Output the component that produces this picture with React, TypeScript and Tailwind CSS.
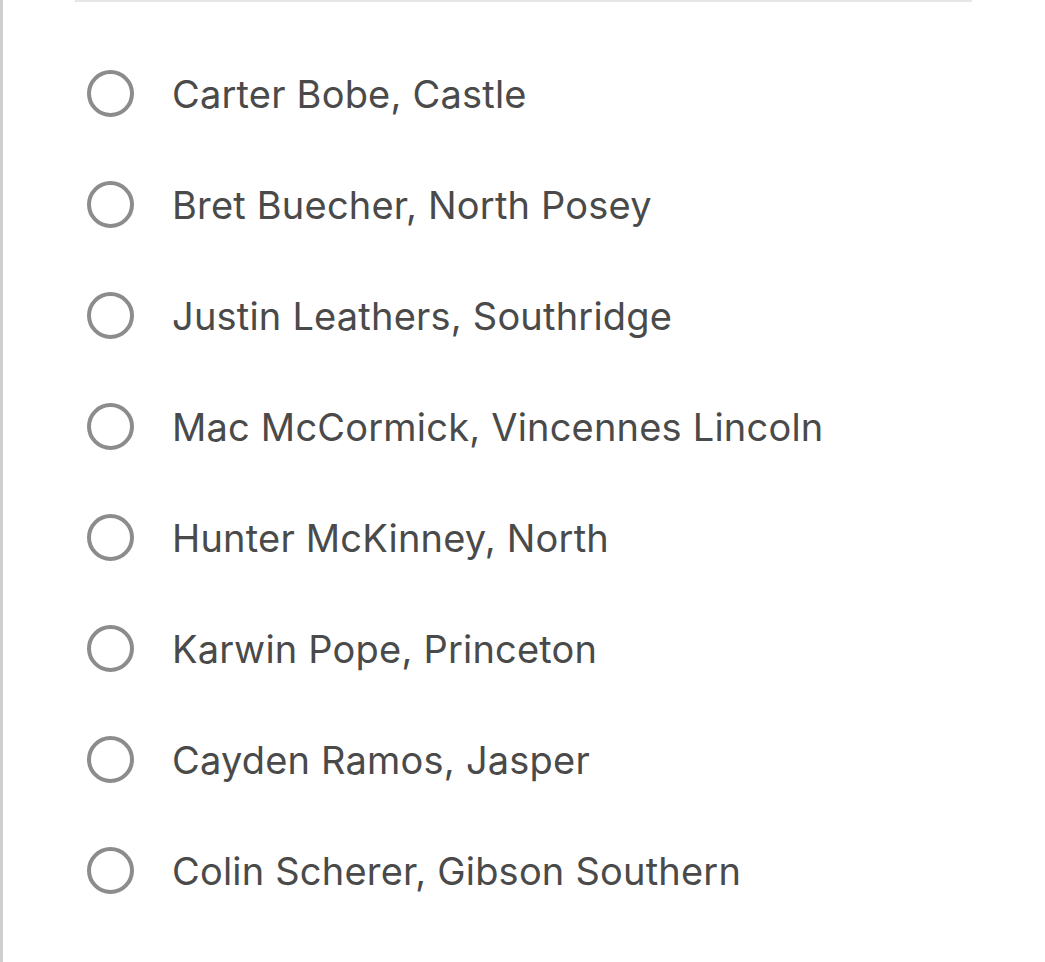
const players = [
  "Carter Bobe, Castle",
  "Bret Buecher, North Posey",
  "Justin Leathers, Southridge",
  "Mac McCormick, Vincennes Lincoln",
  "Hunter McKinney, North",
  "Karwin Pope, Princeton",
  "Cayden Ramos, Jasper",
  "Colin Scherer, Gibson Southern",
];

const App = () => {
  return (
    <div
      className="h-[962px] w-[1045px] overflow-hidden border-l-[3px] border-[#cfcfcf] bg-white"
      style={{ fontFamily: "Inter, 'Noto Sans', sans-serif" }}
    >
      <div className="ml-[72px] mr-[73px] h-[2px] bg-[#e6e6e6]" />
      <ul className="pt-[36px]">
        {players.map((name) => (
          <li key={name} className="flex h-[111px] items-center pl-[84px]">
            <span className="h-[47px] w-[47px] shrink-0 rounded-full border-[4px] border-[#8c8c8c]" />
            <span className="ml-[38px] text-[38px] leading-none tracking-[0.2px] text-[#4a4a4a]">
              {name}
            </span>
          </li>
        ))}
      </ul>
    </div>
  );
};

export default App;
